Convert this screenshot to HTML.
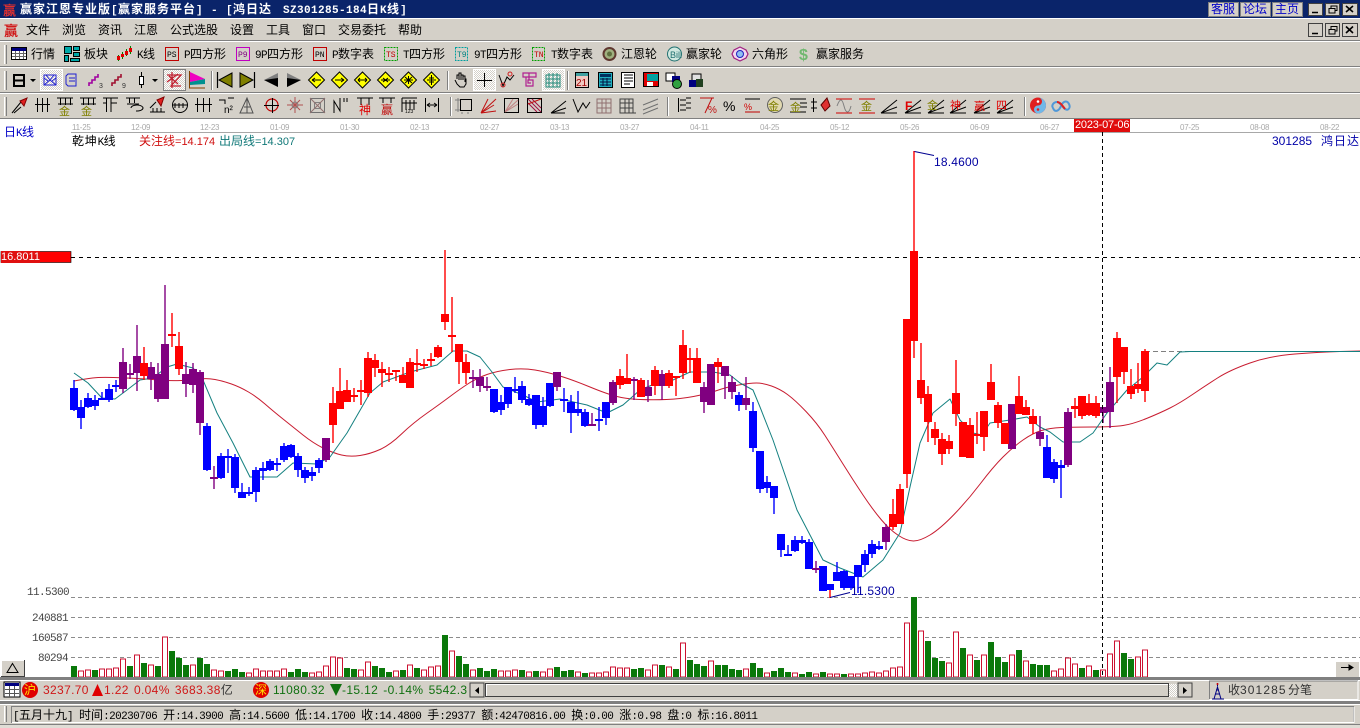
<!DOCTYPE html>
<html><head><meta charset="utf-8"><title>赢家江恩专业版</title>
<style>
html,body{margin:0;padding:0;width:1360px;height:728px;overflow:hidden;background:#d4d0c8}
svg{position:absolute;left:0;top:0}
.t{position:absolute;white-space:nowrap;line-height:14px;height:14px;font:12px/14px "WenQuanYi Zen Hei","Noto Sans CJK SC",sans-serif;color:#000}
.t i{font:normal 11px/14px "Liberation Mono",monospace;letter-spacing:-.6px}
.a{position:absolute;white-space:nowrap;font:12px/14px "Liberation Sans","WenQuanYi Zen Hei",sans-serif}
.a em{font-style:normal;font-size:11px}
.d{position:absolute;top:123px;font:8px/10px "Liberation Sans",sans-serif;color:#a8a8a8;white-space:nowrap;letter-spacing:-.25px}
.title{color:#fff;font-weight:bold;letter-spacing:1px;top:2px}
.title i{font-weight:bold;letter-spacing:.4px}
.b{color:#0000c8}
.s{letter-spacing:.35px;word-spacing:1.5px}
</style></head><body>
<svg width="1360" height="728" viewBox="0 0 1360 728">
<defs><pattern id="dz" width="2" height="2" patternUnits="userSpaceOnUse"><rect width="2" height="2" fill="#fff"/><rect width="1" height="1" fill="#d4d0c8"/><rect x="1" y="1" width="1" height="1" fill="#d4d0c8"/></pattern></defs>
<!-- chrome -->
<rect width="1360" height="728" fill="#d4d0c8"/>
<rect width="1360" height="18" fill="#0a246a"/>
<rect y="18" width="1360" height="1" fill="#fff"/>
<path d="M0 40.5H1360M0 66.5H1360M0 92.5H1360" stroke="#808080"/>
<path d="M0 41.5H1360M0 67.5H1360M0 93.5H1360" stroke="#fff"/>
<rect y="118" width="1360" height="1" fill="#808080"/>
<rect y="119" width="1360" height="558" fill="#fff"/>
<path d="M4.5 45V64M4.5 71V90M4.5 97V116" stroke="#fff" stroke-width="1"/><path d="M6.5 45V64M6.5 71V90M6.5 97V116" stroke="#808080"/>
<path d="M211.5 71V90M447.5 71V90M567.5 71V90M667.5 97V116M1024.5 97V116M450.5 97V116" stroke="#808080"/><path d="M212.5 71V90M448.5 71V90M568.5 71V90M668.5 97V116M1025.5 97V116M451.5 97V116" stroke="#fff"/>
<!-- top-right buttons -->
<g fill="#d4d0c8" stroke="#808080"><rect x="1208.5" y="2.5" width="30" height="14"/><rect x="1240.5" y="2.5" width="30" height="14"/><rect x="1272.5" y="2.5" width="30" height="14"/></g>
<g fill="#d4d0c8" stroke="#404040"><rect x="1308.5" y="3.5" width="14" height="12"/><rect x="1325.5" y="3.5" width="14" height="12"/><rect x="1342.5" y="3.5" width="15" height="12"/><rect x="1308.5" y="23.5" width="14" height="13"/><rect x="1325.5" y="23.5" width="14" height="13"/><rect x="1342.5" y="23.5" width="15" height="13"/></g>
<path d="M1312 12.5h6M1312 33.5h6M1346 6l7 6M1353 6l-7 6M1346 26.5l7 6.5M1353 26.5l-7 6.5" stroke="#000" stroke-width="1.6"/>
<path d="M1329 8.5h6v4.5h-6zM1331 8.5v-2.5h6v4.5h-2M1329 29.5h6v4.5h-6zM1331 29.5v-3h6v4.5h-2" fill="none" stroke="#000"/>
<!-- app icons -->
<text x="3" y="15" font-family="WenQuanYi Zen Hei,Noto Sans CJK SC,sans-serif" font-size="13" fill="#e03030" font-weight="bold">赢</text>
<text x="4" y="36" font-family="WenQuanYi Zen Hei,Noto Sans CJK SC,sans-serif" font-size="14" fill="#d01818" font-weight="bold">赢</text>
<!-- toolbar 1 icons -->
<g>
<rect x="11.5" y="47.5" width="15" height="12" fill="#fff" stroke="#000"/><rect x="12" y="48" width="14" height="3" fill="#000080"/><path d="M12 53.5h14M12 56.5h14M15.5 51v8M19.5 51v8M23.5 51v8" stroke="#666"/>
<g fill="#00a8a8" stroke="#000"><rect x="64.5" y="46.5" width="7" height="7"/><rect x="73.5" y="46.5" width="6" height="4"/><rect x="73.5" y="52.5" width="6" height="4"/><rect x="64.5" y="55.5" width="4" height="6"/><rect x="70.5" y="58.5" width="9" height="3"/></g>
<path d="M118.5 55V61M122.5 52V59M126.5 49V56M130.5 46V54" stroke="#008000"/><g fill="#e00000"><rect x="117" y="56" width="3" height="4"/><rect x="121" y="54" width="3" height="3"/><rect x="125" y="51" width="3" height="4"/><rect x="129" y="48" width="3" height="4"/></g>
<g fill="none"><rect x="165.5" y="47.5" width="13" height="13" stroke="#c00000"/><rect x="236.5" y="47.5" width="13" height="13" stroke="#c000c0"/><rect x="313.5" y="47.5" width="13" height="13" stroke="#c00000"/><rect x="384.5" y="47.5" width="13" height="13" stroke="#00a000" stroke-dasharray="2 1"/><rect x="455.5" y="47.5" width="12" height="13" stroke="#00a0a0" stroke-dasharray="2 1"/><rect x="532.5" y="47.5" width="12" height="13" stroke="#00a000" stroke-dasharray="2 1"/></g>
<g font-family="Liberation Mono,monospace" font-size="8"><text x="167" y="57" fill="#000">PS</text><text x="238" y="57" fill="#800080">P9</text><text x="315" y="57" fill="#000">PN</text><text x="386" y="57" fill="#c00000">TS</text><text x="457" y="57" fill="#008080">T9</text><text x="534" y="57" fill="#c00000">TN</text></g>
<circle cx="609.5" cy="54" r="6" fill="#a0b080" stroke="#603830" stroke-width="2"/><circle cx="609.5" cy="54" r="2.5" fill="#607040"/>
<circle cx="674.5" cy="54" r="7" fill="#d0e8e0" stroke="#207070"/><text x="670" y="58" font-family="Liberation Sans" font-size="9" fill="#207070">Bill</text>
<polygon points="740,47 746,50 748,54 746,58 740,61 734,58 732,54 734,50" fill="#f0d8f0" stroke="#a02080" stroke-width="1.2"/><circle cx="740" cy="54" r="3.5" fill="#90c0f0" stroke="#2020c0"/>
<text x="799" y="60" font-family="Liberation Sans" font-weight="bold" font-size="16" fill="#70b870">$</text>
</g>
<!-- toolbar 2 icons -->
<rect x="40.5" y="69.5" width="22" height="21" fill="url(#dz)" stroke="#fff"/>
<rect x="163.5" y="69.5" width="22" height="21" fill="url(#dz)" stroke="#808080"/>
<rect x="473.5" y="69.5" width="22" height="21" fill="url(#dz)" stroke="#fff"/>
<rect x="542.5" y="69.5" width="22" height="21" fill="url(#dz)" stroke="#fff"/>
<path d="M14 75h10v11h-10zM14 80.5h10" fill="none" stroke="#000" stroke-width="2"/>
<path d="M30 79h6l-3 3zM152 79h6l-3 3z" fill="#000"/>
<path d="M44 75h12v10h-12zM46 75l4 5 4-5M44 85l6-5 6 5M56 78l-4 3M44 78l4 3" fill="none" stroke="#2020d0"/>
<path d="M68 74h8v12h-8l-2-2v-8zM69 78h6M69 81h6" fill="none" stroke="#2020d0"/>
<path d="M89 86v-3h3v-3h3v-3h3v-3" fill="none" stroke="#a000a0" stroke-width="1.6"/><path d="M112 86v-3h3v-3h3v-3h3v-3" fill="none" stroke="#a01030" stroke-width="1.6"/>
<text x="99" y="88" font-family="Liberation Sans" font-size="7" fill="#333">3</text><text x="122" y="88" font-family="Liberation Sans" font-size="7" fill="#333">9</text>
<path d="M141.5 72v4M141.5 84v4" stroke="#000"/><rect x="139.5" y="76.5" width="4" height="8" fill="#fff" stroke="#000"/>
<path d="M167 75h14l-10 11 10 0M172 72v16M167 82l11-8M178 84l-9-8" fill="none" stroke="#c02030" stroke-width="1.3"/>
<polygon points="190,72 205,79 190,82" fill="#f000c0"/><polygon points="190,82 205,79 205,84 190,85" fill="#009090"/><path d="M189.5 71V88H205" fill="none" stroke="#804000"/>
<path d="M217.5 72v16M254.5 72v16" stroke="#000" stroke-width="1.2"/>
<polygon points="232,73 219,80 232,87" fill="#808000" stroke="#000"/><polygon points="240,73 253,80 240,87" fill="#808000" stroke="#000"/>
<polygon points="278,73 264,80 278,87" fill="#808080"/><polygon points="278,78 264,80 278,87" fill="#000"/>
<polygon points="287,73 301,80 287,87" fill="#808080"/><polygon points="287,78 301,80 287,87" fill="#000"/>
<g fill="#ffff00" stroke="#000"><polygon points="316.5,72 324.5,80 316.5,88 308.5,80"/><polygon points="339.5,72 347.5,80 339.5,88 331.5,80"/><polygon points="362.5,72 370.5,80 362.5,88 354.5,80"/><polygon points="385.5,72 393.5,80 385.5,88 377.5,80"/><polygon points="408.5,72 416.5,80 408.5,88 400.5,80"/><polygon points="431.5,72 439.5,80 431.5,88 423.5,80"/></g>
<path d="M312 80h9M312 80l3-2M312 80l3 2M335 80h9M344 80l-3-2M344 80l-3 2M358 80h9M358 80l2-2M358 80l2 2M367 80l-2-2M367 80l-2 2M381 80h9M383 78l5 4M388 78l-5 4M404 80h9M408.5 76v8M405 77l7 6M412 77l-7 6M431.5 75v10M427 80h9M429 78h5M429 82h5" fill="none" stroke="#000"/>
<path d="M455 80l2 4 3 3h4l2-3v-5h-1v3M457 79v-4h2v5M459 75v-2h2v7M461 75h2v5M463 76h2v5" fill="none" stroke="#000"/>
<path d="M484.5 73v14M477 80.5h15" stroke="#000"/>
<path d="M499 75l4 11 4-9 3 3 4-5" fill="none" stroke="#000"/><circle cx="503" cy="85" r="2" fill="none" stroke="#d02020"/><circle cx="510" cy="74" r="2" fill="none" stroke="#d02020"/>
<path d="M523 73h13v4h-13zM526 77v9h7v-6h-5v3h3M529 73v7" fill="none" stroke="#b02090" stroke-width="1.2"/>
<path d="M546 75h14v12h-14zM549 73v14M553 73v14M557 73v14M546 79h14M546 83h14" fill="none" stroke="#208878"/>
<rect x="575.5" y="72.5" width="13" height="15" fill="#f0c8c0" stroke="#000"/><rect x="576" y="73" width="12" height="3" fill="#40a0a0"/><text x="576" y="86" font-family="Liberation Sans" font-size="10" fill="#a00000">21</text>
<rect x="598.5" y="72.5" width="14" height="15" fill="#20b0c0" stroke="#000"/><rect x="600" y="74" width="11" height="3" fill="#003060"/><path d="M600 79h11M600 82h11M600 85h11M603 78v8M607 78v8" stroke="#001040"/>
<rect x="621.5" y="72.5" width="13" height="15" fill="#fff" stroke="#000"/><path d="M624 75h9M624 78h9M624 81h9M624 84h6" stroke="#000"/>
<rect x="643.5" y="72.5" width="15" height="14" fill="#e00000" stroke="#000"/><rect x="647" y="74" width="11" height="7" fill="#00a0a0"/><rect x="647" y="82" width="6" height="4" fill="#fff"/>
<rect x="666" y="73" width="9" height="8" fill="#fff" stroke="#000"/><rect x="672" y="76" width="8" height="6" fill="#000080"/><circle cx="677" cy="84" r="4.5" fill="#30a040" stroke="#000"/>
<rect x="692" y="74" width="9" height="7" fill="#e0e0e0" stroke="#000"/><rect x="689" y="80" width="13" height="7" fill="#000080"/><rect x="696" y="79" width="7" height="8" fill="#204020"/>
<!-- toolbar 3 icons -->
<g fill="none" stroke="#000">
<path d="M12 113l9-11M14 113l7-6"/><polygon points="20,101 27,98 24,106" fill="#e02020" stroke="#800000"/>
<path d="M37.5 98v14M42.5 98v14M47.5 98v14M35 104.5h15"/>
<path d="M57 98h16M60.5 98v7M65.5 98v7M70.5 98v7M58 104h15"/><path d="M80 98h16M83.5 98v7M88.5 98v7M93.5 98v7M81 104h15"/>
<path d="M103 98h15M106.5 98v14M111 98v14M111 103h6M103 103h4"/>
<path d="M126 98h14M129.5 98v5M134.5 98v5M127 104h12M131 108a6 3 0 1 1 5 3"/>
<polygon points="157,100 164,97 161,106" fill="#e02020" stroke="#800000"/><path d="M150 112h15M153 108v4M157 108v4M161 108v4M150 108l6-6"/>
<circle cx="180" cy="105" r="7.5"/><path d="M172 105h16M175 103v5M179 103v5M183 103v5"/>
<path d="M197.5 98v14M203.5 98v14M209.5 98v14M195 104.5h17"/>
<path d="M219 100h6v4M228 98h6"/>
<path d="M240 113l7-15 6 15zM247 98v15M244 107h6" stroke="#505050"/>
<circle cx="272" cy="105" r="6" stroke="#c00000" stroke-width="1.2"/><path d="M264 105.5h15M272.5 98v15" stroke="#000"/>
<path d="M287 105h16M295 97v16M290 100l10 10M300 100l-10 10" stroke="#b05050"/><circle cx="295" cy="105" r="3" stroke="#808080"/>
<rect x="310.5" y="98.5" width="14" height="14" stroke="#707070"/><rect x="314.5" y="102.5" width="6" height="6" stroke="#808080"/><path d="M310 98l15 15M325 98l-15 15" stroke="#907070"/>
<path d="M334 113v-12l6 10v-13M344 98v4M347 98v4" stroke="#000"/>
<path d="M357 98h16M361 98v7M369 98v7"/>
<path d="M379 98h16M383 98v5M391 98v5"/>
<path d="M402 98h15M402 98v14M406 100v10M410 100v10M414 100v10M402 103h15"/>
<path d="M425.5 98v14M438.5 98v14M427 105h10M427 105l3-2M427 105l3 2M437 105l-3-2M437 105l-3 2"/>
<rect x="460.5" y="99.5" width="11" height="11"/><path d="M455 100h5M455 110h5M458 98v14M462 112v2M468 112v2" stroke="#808080"/>
<path d="M481 113l15-14M481 113l7-14M481 113l13-8M481 113l15-2" stroke="#c01010"/>
<rect x="504.5" y="98.5" width="14" height="14"/><path d="M505 112l13-8M505 112l8-13M505 112l13-12" stroke="#c08080"/>
<rect x="527.5" y="98.5" width="14" height="14"/><path d="M528 99l13 13M532 99l9 9M528 103l9 9" stroke="#a01040"/><path d="M528 104l13-5" stroke="#c01010"/>
<path d="M551 113l15-12M551 113l15-5M551 113h14"/>
<path d="M573 99l5 13 5-9 3 5 4-6"/>
<path d="M597 99h14v14h-14zM597 103h14M597 108h14M602 99v14M606 99v14" stroke="#907070"/>
<path d="M620 99h13v14h-13zM620 103h13M620 108h13M625 99v14M629 99v14M633 113h3" stroke="#404040"/>
<path d="M643 105l15-6M643 110l15-6M643 114l15-6" stroke="#707070"/>
<path d="M678.5 98v14M680 100h6M680 105h6M680 110h6M686 98h5M686 103h5M686 108h5"/>
<path d="M700 98h14M712 98l-7 15" stroke="#c01010"/>
<path d="M745 99h15M745 112h15" stroke="#000"/><path d="M745 112h15" stroke="#c00000"/>
<circle cx="775" cy="105" r="7.5" fill="#e0d8b0" stroke="#606060"/>
<path d="M790 99h16M790 112h16M800 103h7M800 107h7"/>
<path d="M813.5 98v14M811 102h6M811 108h6"/><polygon points="821,105 827,98 830,106 825,111" fill="#e03030" stroke="#600000"/>
<path d="M836 99h16M836 113h16" stroke="#d00000"/><path d="M837 106c3-8 5-8 7 0s5 8 7 0" stroke="#808080"/>
<path d="M859 99h16M859 113h16" stroke="#d00000"/>
<path d="M881 113l16-13M881 113l16-6M881 113h16"/>
<path d="M905 113l16-13M905 113l16-6M905 113h16M928 113l16-13M928 113l16-6M928 113h16M950 113l16-13M950 113l16-6M950 113h16M974 113l16-13M974 113l16-6M974 113h16M997 113l16-13M997 113l16-6M997 113h16"/>
</g>
<g font-family="WenQuanYi Zen Hei,Noto Sans CJK SC,sans-serif" font-size="11">
<text x="59" y="115" fill="#808000">金</text><text x="81" y="115" fill="#808000">金</text><text x="359" y="114" fill="#e00000" font-size="12">神</text><text x="381" y="114" fill="#c01010" font-size="12">赢</text>
<text x="768" y="110" fill="#808000" font-size="11">金</text><text x="790" y="111" fill="#808000">金</text><text x="861" y="110" fill="#808000">金</text>
<text x="905" y="110" fill="#e00000" font-family="Liberation Sans" font-weight="bold" font-size="12">F</text><text x="927" y="109" fill="#808000">金</text><text x="950" y="109" fill="#e00000">神</text><text x="974" y="110" fill="#e00000">赢</text><text x="996" y="109" fill="#e00000">四</text>
</g>
<text x="224" y="113" font-family="Liberation Sans" font-size="10" fill="#000">n²</text>
<text x="405" y="113" font-family="Liberation Sans" font-size="5" fill="#000">123</text>
<text x="723" y="111" font-family="Liberation Sans" font-size="14" fill="#000">%</text>
<text x="708" y="113" font-family="Liberation Sans" font-size="10" fill="#c01010">%</text>
<text x="744" y="110" font-family="Liberation Sans" font-size="9" fill="#d00000">%</text>
<circle cx="1038" cy="105.5" r="8" fill="#e02020"/><path d="M1038 97.5a8 8 0 0 1 0 16a4 4 0 0 1 0-8a4 4 0 0 0 0-8z" fill="#70b8e8"/><circle cx="1038" cy="101.5" r="1.3" fill="#fff"/><circle cx="1038" cy="109.5" r="1.3" fill="#e02020"/>
<path d="M1053 108c2 5 6 3 8-2s6-6 8-2-1 7-4 5-5-7-8-7-6 3-4 6" fill="none" stroke="#5098d8" stroke-width="2"/><path d="M1057 102c3 0 5 3 8 7" fill="none" stroke="#e02020" stroke-width="2"/>
<!-- chart frame -->
<path d="M71 132.5H1360" stroke="#a8a8a8"/>
<g stroke="#8c8c8c" stroke-dasharray="4 3"><path d="M71 597.5H1360M71 617.5H1360M71 637.5H1360M71 657.5H1360"/></g>
<path d="M71 257.5H1360" stroke="#000" stroke-dasharray="4 4"/>
<path d="M1145 351.5H1190" stroke="#808080" stroke-dasharray="5 3"/>
<!-- MA lines -->
<path fill="none" stroke="#c81c30" d="M74 381L79.5 380Q85 379 92.5 378Q100 377 113.5 377.5Q127 378 137 378.5Q147 379 158.5 380Q170 381 181.5 380.5Q193 380 200 379Q207 378 215 379.5Q223 381 231.5 384Q240 387 248.5 392Q257 397 265 404Q273 411 283 419Q293 427 303 435Q313 443 323 448Q333 453 341.5 455Q350 457 360 455.5Q370 454 380 449.5Q390 445 401.5 434Q413 423 426.5 413.5Q440 404 450 396.5Q460 389 468.5 383.5Q477 378 487 374.5Q497 371 510 369.5Q523 368 535 370Q547 372 560 376Q573 380 590 387Q607 394 617 396.5Q627 399 640 399.5Q653 400 666.5 399.5Q680 399 693.5 396.5Q707 394 717 390.5Q727 387 738.5 385Q750 383 756.5 383Q763 383 771.5 386Q780 389 787.5 394.5Q795 400 806 411.5Q817 423 825 435.5Q833 448 843 464Q853 480 863 495Q873 510 881.5 520Q890 530 898.5 535.5Q907 541 913.5 541Q920 541 930 535Q940 529 954 514.5Q968 500 980.5 483.5Q993 467 1003 457Q1013 447 1023 440Q1033 433 1041.5 430.5Q1050 428 1061.5 427.5Q1073 427 1093 427Q1113 427 1123 425.5Q1133 424 1146.5 418.5Q1160 413 1170 408Q1180 403 1192.5 394.5Q1205 386 1217.5 378Q1230 370 1250 363Q1270 356 1295 354Q1320 352 1340 351.5L1360 351"/>
<polyline fill="none" stroke="#148080" stroke-linejoin="round" points="74,373 88,383 102,398 115,399 127,390 140,380 153,378 167,367 177,364 193,368 203,380 217,413 233,443 250,477 277,477 293,463 317,464 330,457 347,433 370,393 383,382 410,372 437,365 453,351 467,351 480,357 492,372 503,387 523,395 537,402 560,399 587,405 607,413 623,405 640,390 657,383 673,380 690,372 713,372 730,375 740,383 753,390 760,407 773,440 797,510 823,560 840,568 863,577 883,560 900,533 910,487 920,443 933,413 950,399 960,420 973,433 982,435 990,423 1010,420 1027,417 1040,427 1050,432 1063,442 1080,442 1093,433 1107,413 1127,390 1143,377 1157,363 1167,365 1180,352 1190,351.5 1360,351.5"/>
<!-- volume -->
<path fill="none" stroke="#0a780a" stroke-width="6" d="M74 666V677M95 670V677M130 666V677M144 663V677M158 666V677M172 651V677M179 658V677M186 665V677M200 658V677M207 664V677M228 671V677M235 669V677M242 672V677M291 672V677M298 669V677M305 672V677M347 668V677M354 669V677M375 666V677M382 668V677M389 672V677M403 670V677M417 668V677M445 635V677M459 656V677M466 664V677M480 668V677M487 671V677M494 669V677M522 670V677M536 671V677M557 667V677M564 671V677M571 670V677M585 673V677M634 669V677M641 668V677M662 665V677M676 669V677M690 660V677M697 664V677M704 666V677M718 665V677M725 665V677M732 669V677M739 670V677M753 663V677M760 668V677M774 671V677M781 668V677M788 672V677M802 674V677M809 672V677M823 672V677M844 674V677M914 597V677M928 641V677M935 658V677M942 661V677M963 648V677M977 660V677M991 642V677M998 657V677M1005 662V677M1019 650V677M1033 664V677M1040 665V677M1047 665V677M1082 668V677M1096 670V677M1124 653V677M1131 659V677"/>
<path fill="#fff" stroke="#cc1030" d="M78.5 671h5V677h-5zM85.5 670h5V677h-5zM99.5 669h5V677h-5zM106.5 669h5V677h-5zM113.5 668h5V677h-5zM120.5 659h5V677h-5zM134.5 655h5V677h-5zM148.5 665h5V677h-5zM162.5 637h5V677h-5zM190.5 665h5V677h-5zM211.5 670h5V677h-5zM218.5 671h5V677h-5zM246.5 673h5V677h-5zM253.5 669h5V677h-5zM260.5 671h5V677h-5zM267.5 671h5V677h-5zM274.5 671h5V677h-5zM281.5 669h5V677h-5zM309.5 673h5V677h-5zM316.5 672h5V677h-5zM323.5 666h5V677h-5zM330.5 657h5V677h-5zM337.5 658h5V677h-5zM358.5 670h5V677h-5zM365.5 662h5V677h-5zM393.5 671h5V677h-5zM407.5 665h5V677h-5zM421.5 670h5V677h-5zM428.5 667h5V677h-5zM435.5 666h5V677h-5zM449.5 651h5V677h-5zM470.5 670h5V677h-5zM498.5 671h5V677h-5zM505.5 671h5V677h-5zM512.5 670h5V677h-5zM526.5 672h5V677h-5zM540.5 672h5V677h-5zM547.5 669h5V677h-5zM575.5 672h5V677h-5zM589.5 673h5V677h-5zM596.5 673h5V677h-5zM603.5 672h5V677h-5zM610.5 667h5V677h-5zM617.5 668h5V677h-5zM624.5 668h5V677h-5zM645.5 670h5V677h-5zM652.5 665h5V677h-5zM666.5 667h5V677h-5zM680.5 643h5V677h-5zM708.5 661h5V677h-5zM743.5 669h5V677h-5zM764.5 673h5V677h-5zM792.5 673h5V677h-5zM813.5 674h5V677h-5zM827.5 674h5V677h-5zM834.5 674h5V677h-5zM848.5 674h5V677h-5zM855.5 674h5V677h-5zM862.5 673h5V677h-5zM869.5 672h5V677h-5zM876.5 673h5V677h-5zM883.5 671h5V677h-5zM890.5 668h5V677h-5zM897.5 667h5V677h-5zM904.5 623h5V677h-5zM918.5 631h5V677h-5zM946.5 663h5V677h-5zM953.5 632h5V677h-5zM967.5 655h5V677h-5zM981.5 655h5V677h-5zM1009.5 655h5V677h-5zM1023.5 661h5V677h-5zM1051.5 671h5V677h-5zM1058.5 669h5V677h-5zM1065.5 658h5V677h-5zM1072.5 664h5V677h-5zM1086.5 666h5V677h-5zM1100.5 670h5V677h-5zM1107.5 654h5V677h-5zM1114.5 641h5V677h-5zM1135.5 657h5V677h-5zM1142.5 650h5V677h-5z"/>
<!-- candles: wicks -->
<path fill="none" stroke="#0000ff" stroke-width="1.4" d="M74 380V411M81 400V429M88 393V408M95 395V410M102 392V400M109 384V402M116 380V392M207 423V471M221 453V479M228 449V473M235 454V493M242 483V498M249 487V496M256 467V502M263 462V480M270 459V471M277 458V471M284 443V462M291 444V458M298 453V477M305 467V483M312 467V481M319 458V473M494 389V413M501 395V415M508 387V408M515 377V393M522 381V403M529 394V406M536 395V429M543 397V427M550 383V407M564 388V412M571 395V433M578 391V416M585 409V427M599 407V431M606 402V425M739 392V411M753 402V452M760 451V493M767 476V493M774 486V514M781 534V557M788 545V556M795 536V552M802 536V544M809 539V569M837 562V581M844 570V590M851 576V590M858 565V593M865 550V572M872 540V558M879 541V550M1047 435V478M1054 459V483M1061 460V498"/>
<path fill="none" stroke="#800080" stroke-width="1.4" d="M123 348V393M130 364V379M137 325V391M151 362V390M158 363V402M165 285V399M186 362V397M193 363V393M200 370V435M214 466V489M326 438V462M473 370V388M480 369V392M487 377V391M557 372V391M592 413V425M613 380V405M634 377V400M648 380V402M662 370V400M704 382V413M725 366V399M732 376V399M746 377V410M816 561V573M886 524V550M1040 416V446M1068 408V467M1103 407V423M1110 367V428"/>
<path fill="none" stroke="#ff0000" stroke-width="1.4" d="M144 347V380M172 313V347M179 332V375M333 387V443M340 368V409M347 380V402M354 388V402M361 380V405M368 352V397M375 354V377M382 362V387M389 367V382M396 370V381M403 367V383M410 358V388M417 349V372M424 359V369M431 353V366M438 345V358M445 250V330M452 297V352M459 344V384M466 354V384M620 369V389M627 354V384M641 378V397M655 366V395M669 370V388M676 376V396M683 330V379M690 348V373M697 348V383M718 358V383M830 584V598M893 499V530M900 484V524M907 319V488M914 151V358M921 343V404M928 386V442M935 422V445M942 433V465M949 435V454M956 360V426M970 418V458M977 412V444M984 411V451M991 364V400M998 402V428M1019 376V414M1026 400V415M1033 409V434M1075 398V418M1082 396V419M1089 394V416M1096 396V418M1117 332V403M1124 347V384M1131 369V399M1138 363V393M1145 349V402"/>
<!-- candles: bodies -->
<path fill="none" stroke="#0000ff" stroke-width="8" d="M74 388V410M81 407V418M88 398V407M95 400V406M102 398V400M109 389V400M116 385V387M207 426V470M221 456V478M228 456V458M235 457V488M242 492V498M249 492V494M256 470V492M263 468V471M270 461V470M277 463V465M284 446V460M291 445V457M298 456V470M305 470V478M312 472V476M319 460V468M494 389V412M501 402V410M508 387V404M515 389V391M522 386V400M529 399V405M536 395V425M543 406V425M550 383V406M564 399V401M571 402V413M578 409V413M585 412V426M599 419V421M606 402V418M739 395V405M753 411V448M760 451V489M767 482V488M774 486V498M781 534V550M788 554V556M795 540V551M802 540V543M809 542V569M823 566V591M830 584V590M837 572V581M844 571V588M851 576V588M858 565V577M865 554V565M872 544V554M879 546V549M1047 447V478M1054 462V479M1061 465V468"/>
<path fill="none" stroke="#800080" stroke-width="8" d="M123 362V389M130 373V375M137 356V373M151 367V379M158 374V399M165 344V399M186 374V384M193 369V385M200 372V423M214 477V479M326 438V460M473 377V379M480 377V386M487 386V388M557 372V387M592 424V426M613 382V403M634 379V381M648 387V396M662 374V386M704 387V402M711 364V405M725 366V376M732 382V392M746 398V405M816 568V570M886 527V542M1012 404V449M1040 432V439M1068 412V465M1103 407V413M1110 382V412"/>
<path fill="none" stroke="#ff0000" stroke-width="8" d="M144 363V376M172 334V336M179 346V369M333 403V425M340 391V409M347 390V402M354 395V397M361 390V392M368 358V393M375 360V368M382 369V373M389 373V375M396 370V372M403 375V383M410 362V388M417 363V365M424 364V366M431 359V361M438 347V357M445 314V322M452 335V337M459 344V362M466 362V373M620 376V385M627 378V384M641 380V397M655 370V386M669 373V386M676 376V378M683 345V373M690 358V360M697 358V383M718 362V367M893 514V527M900 489V524M907 319V474M914 251V341M921 380V398M928 394V422M935 429V438M942 439V454M949 441V449M956 393V414M963 422V457M970 425V458M977 434V436M984 411V437M991 382V400M998 405V423M1005 423V444M1019 396V414M1026 407V415M1033 416V424M1075 406V409M1082 396V416M1089 403V415M1096 403V416M1117 338V377M1124 347V372M1131 386V394M1138 384V389M1145 351V391"/>
<!-- annotations -->
<path d="M914.5 151.5L934 155.5M830 597.5L850 592.5" fill="none" stroke="#000090"/>
<path d="M1102.5 132V677" stroke="#000" stroke-dasharray="4 3"/>
<rect x="1" y="251.5" width="70" height="11" fill="#ff0000" stroke="#000" stroke-width=".6"/>
<rect x="1" y="251" width="39" height="12" fill="#e01010"/>
<rect x="1074" y="119" width="56" height="13" fill="#e00c0c"/>
<!-- side buttons -->
<rect x="1" y="660" width="24" height="17" fill="#d4d0c8"/><path d="M1 660.5H25M1.5 660V677" stroke="#fff" fill="none"/><path d="M24.5 660V676.5H1" stroke="#404040" fill="none"/><path d="M12.5 663.5L18 672.5H7z" fill="none" stroke="#000"/>
<rect x="1336" y="661" width="23" height="16" fill="#d4d0c8"/><path d="M1336 661.5H1359" stroke="#fff" fill="none"/><path d="M1341 667.5H1353M1349 665l4 2.5-4 2.5z" stroke="#000" fill="#000"/>
<!-- bottom bars -->
<rect y="677" width="1360" height="3" fill="#808080"/>
<path d="M0 680.5H1360M0 700.5H1360" stroke="#fff"/>
<rect y="701" width="1360" height="3" fill="#808080"/>
<rect y="704" width="1360" height="1" fill="#fff"/>
<rect x="4" y="682" width="16" height="15" fill="#fff" stroke="#000"/><rect x="5" y="683" width="14" height="3" fill="#000080"/><path d="M5 689.5h14M5 693.5h14M9.5 686v11M14.5 686v11" stroke="#555"/>
<circle cx="30" cy="690" r="8" fill="#e00000"/><circle cx="261" cy="690" r="8" fill="#e00000"/>
<polygon points="97.5,684 103,696 92,696" fill="#e00000"/><polygon points="330,684 342,684 336,696" fill="#107010"/>
<rect x="470" y="683" width="14" height="14" fill="#d4d0c8" stroke="#404040"/><path d="M479 687v7l-4-3.5z" fill="#000"/>
<rect x="485.5" y="683.5" width="683" height="13" fill="#d4d0c8" stroke="#404040"/><path d="M486 684.5h682M486.5 684v12" stroke="#fff" fill="none"/>
<rect x="1169" y="684" width="9" height="13" fill="url(#dz)"/>
<rect x="1178" y="683" width="14" height="14" fill="#d4d0c8" stroke="#404040"/><path d="M1183 687v7l4-3.5z" fill="#000"/>
<path d="M1209.5 699V681H1358" stroke="#808080" fill="none"/><path d="M1209.5 699.5H1358V681" stroke="#fff" fill="none"/>
<path d="M1217.5 683v3M1214 699l3.5-12 3.5 12M1212 699h12M1215 694h5M1216 690h3" fill="none" stroke="#000080"/><circle cx="1217.5" cy="684" r="1" fill="#d00000"/>
<path d="M4.5 706V722" stroke="#fff"/><path d="M6.5 706V722" stroke="#808080"/>
<rect x="11.5" y="706.5" width="1342" height="16" fill="#d4d0c8" stroke="#808080"/><path d="M12 722.5H1354M1354 707V723" stroke="#fff" fill="none"/>
<rect y="725" width="1360" height="3" fill="#e0ddd6"/>
<path d="M0 724.5H1360" stroke="#808080"/>
</svg>

<!-- title -->
<div class="t title" style="left:20px">赢家江恩专业版<i>[</i>赢家服务平台<i>]</i></div>
<div class="t title" style="left:211px"><i>-</i></div>
<div class="t title" style="left:226px"><i>[</i>鸿日达</div>
<div class="t title" style="left:283px"><i>SZ301285-184</i>日<i>K</i>线<i>]</i></div>
<div class="t b" style="left:1211px;top:2px">客服</div><div class="t b" style="left:1243px;top:2px">论坛</div><div class="t b" style="left:1275px;top:2px">主页</div>
<!-- menu -->
<div class="t" style="left:26px;top:23px">文件</div><div class="t" style="left:62px;top:23px">浏览</div><div class="t" style="left:98px;top:23px">资讯</div><div class="t" style="left:134px;top:23px">江恩</div><div class="t" style="left:170px;top:23px">公式选股</div><div class="t" style="left:230px;top:23px">设置</div><div class="t" style="left:266px;top:23px">工具</div><div class="t" style="left:302px;top:23px">窗口</div><div class="t" style="left:338px;top:23px">交易委托</div><div class="t" style="left:398px;top:23px">帮助</div>
<!-- toolbar1 labels -->
<div class="t" style="left:31px;top:47px">行情</div><div class="t" style="left:84px;top:47px">板块</div><div class="t" style="left:137px;top:47px"><i>K</i>线</div><div class="t" style="left:184px;top:47px"><i>P</i>四方形</div><div class="t" style="left:255px;top:47px"><i>9P</i>四方形</div><div class="t" style="left:332px;top:47px"><i>P</i>数字表</div><div class="t" style="left:403px;top:47px"><i>T</i>四方形</div><div class="t" style="left:474px;top:47px"><i>9T</i>四方形</div><div class="t" style="left:551px;top:47px"><i>T</i>数字表</div><div class="t" style="left:621px;top:47px">江恩轮</div><div class="t" style="left:686px;top:47px">赢家轮</div><div class="t" style="left:752px;top:47px">六角形</div><div class="t" style="left:816px;top:47px">赢家服务</div>
<!-- date axis -->
<div class="d" style="left:72px">11-25</div><div class="d" style="left:131px">12-09</div><div class="d" style="left:200px">12-23</div><div class="d" style="left:270px">01-09</div><div class="d" style="left:340px">01-30</div><div class="d" style="left:410px">02-13</div><div class="d" style="left:480px">02-27</div><div class="d" style="left:550px">03-13</div><div class="d" style="left:620px">03-27</div><div class="d" style="left:690px">04-11</div><div class="d" style="left:760px">04-25</div><div class="d" style="left:830px">05-12</div><div class="d" style="left:900px">05-26</div><div class="d" style="left:970px">06-09</div><div class="d" style="left:1040px">06-27</div><div class="d" style="left:1180px">07-25</div><div class="d" style="left:1250px">08-08</div><div class="d" style="left:1320px">08-22</div>
<div class="a" style="left:1075px;top:119px;color:#fff;font-size:11px;line-height:13px;letter-spacing:-.2px">2023-07-06</div>
<!-- chart heads -->
<div class="t b" style="left:4px;top:125px">日<i>K</i>线</div>
<div class="t" style="left:72px;top:134px;letter-spacing:.8px">乾坤<i>K</i>线</div>
<div class="a" style="left:139px;top:134px;color:#d01010">关注线<em>=14.174</em></div>
<div class="a" style="left:219px;top:134px;color:#107878">出局线<em>=14.307</em></div>
<div class="a" style="left:1272px;top:134px;color:#0000a8">301285</div>
<div class="t" style="left:1321px;top:134px;color:#0000a8;letter-spacing:1px">鸿日达</div>
<div class="a" style="left:934px;top:155px;color:#0000a0;letter-spacing:.2px">18.4600</div>
<div class="a" style="left:851px;top:584px;color:#0000a0;letter-spacing:.2px">11.5300</div>
<div class="a" style="left:1px;top:250px;color:#fff;font-size:11px">16.8011</div>
<div class="t" style="left:27px;top:584px;color:#444"><i>11.5300</i></div>
<div class="t" style="left:32px;top:610px;color:#444"><i>240881</i></div>
<div class="t" style="left:32px;top:630px;color:#444"><i>160587</i></div>
<div class="t" style="left:38px;top:650px;color:#444"><i>80294</i></div>
<!-- status -->
<div class="t" style="left:24px;top:683px;color:#ffe000">沪</div><div class="t" style="left:255px;top:683px;color:#ffe000">深</div>
<div class="a s" style="left:43px;top:683px;color:#d01818">3237.70</div>
<div class="a s" style="left:104px;top:683px;color:#d01818">1.22 0.04% 3683.38<span style="color:#333">亿</span></div>
<div class="a s" style="left:273px;top:683px;color:#107010">11080.32</div>
<div class="a s" style="left:342px;top:683px;color:#107010">-15.12 -0.14% 5542.3</div>
<div class="t" style="left:1228px;top:683px;color:#333">收</div><div class="a" style="left:1240px;top:683px;color:#333;letter-spacing:1.1px">301285</div><div class="t" style="left:1288px;top:683px;color:#333">分笔</div>
<div class="t" style="left:13px;top:708px"><i>[</i>五月十九<i>] </i>时间<i>:20230706 </i>开<i>:14.3900 </i>高<i>:14.5600 </i>低<i>:14.1700 </i>收<i>:14.4800 </i>手<i>:29377 </i>额<i>:42470816.00 </i>换<i>:0.00 </i>涨<i>:0.98 </i>盘<i>:0 </i>标<i>:16.8011</i></div>
</body></html>
